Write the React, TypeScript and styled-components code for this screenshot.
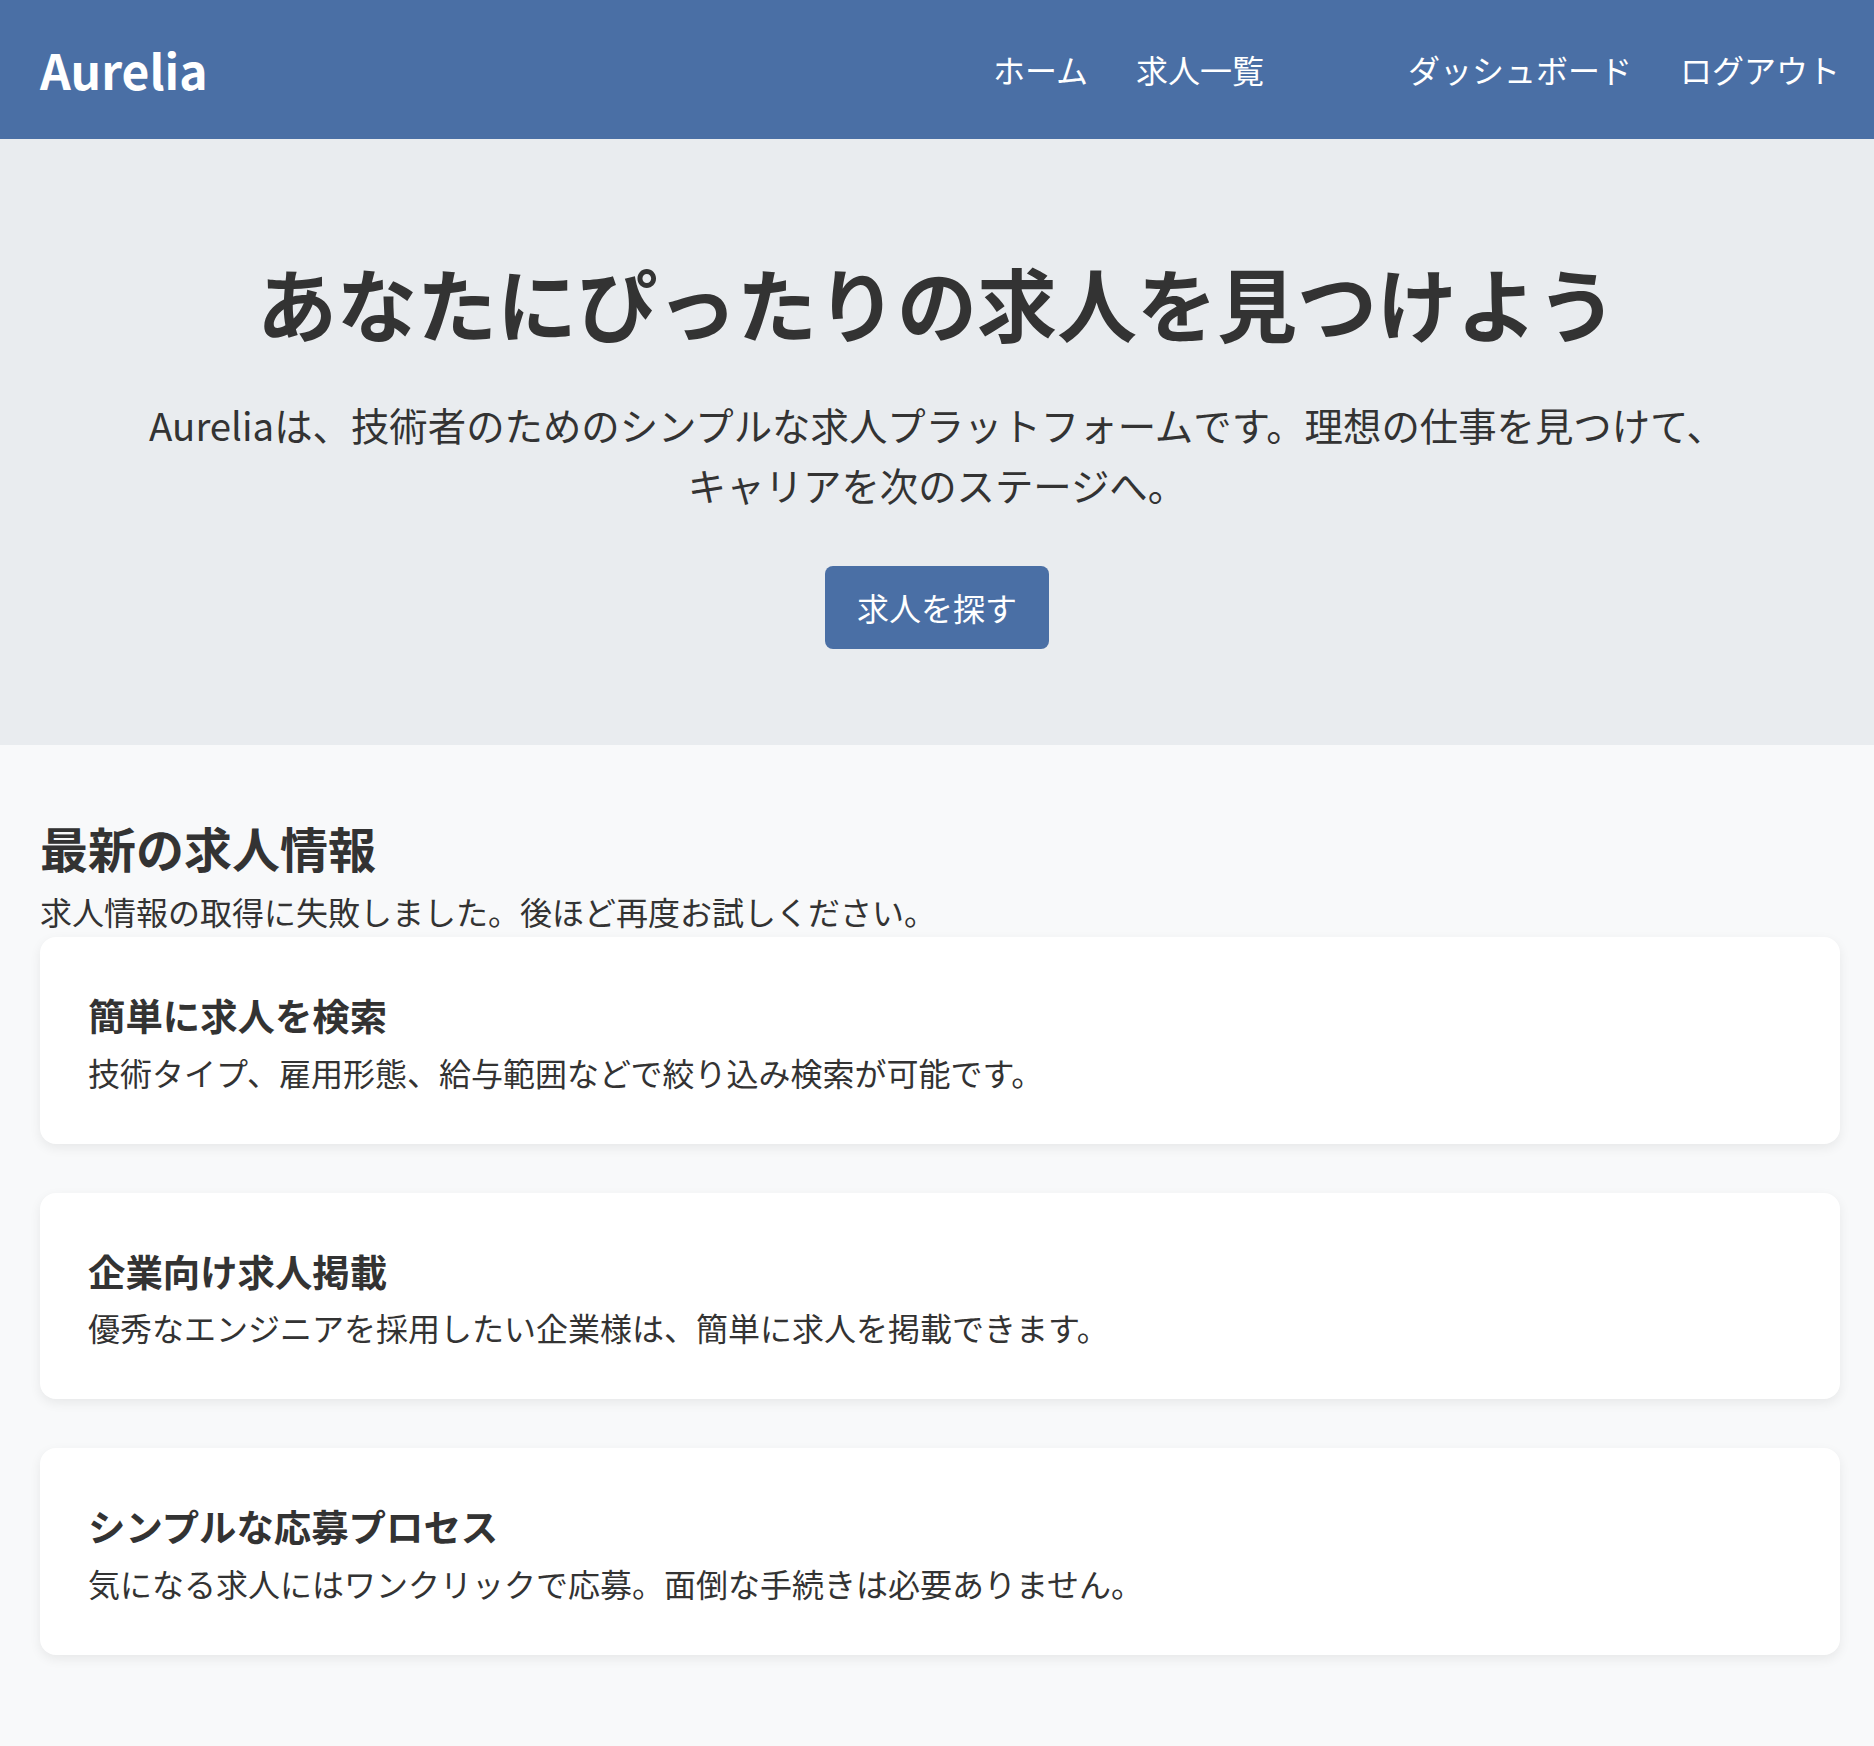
import React from "react";
import styled, { createGlobalStyle } from "styled-components";

const GlobalStyle = createGlobalStyle`
  html, body {
    margin: 0;
    padding: 0;
    background: #f8f9fa;
  }
  body {
    font-family: "Noto Sans CJK JP", "Noto Sans", sans-serif;
    color: #333333;
    font-size: 32px;
    line-height: 1.6;
  }
  * { box-sizing: border-box; }
`;

const Header = styled.header`
  height: 139px;
  background: #4a6fa5;
  display: flex;
  align-items: center;
  justify-content: space-between;
  padding: 0 34px 0 40px;
`;

const Logo = styled.a`
  color: #ffffff;
  font-size: 48px;
  font-weight: 700;
  text-decoration: none;
  line-height: 1.6;
`;

const Nav = styled.nav`
  display: flex;
  align-items: center;
`;

const NavGroup = styled.div<{ $offset?: number }>`
  display: flex;
  align-items: center;
  gap: 48px;
  margin-left: ${(p) => p.$offset ?? 0}px;
`;

const NavLink = styled.a`
  color: #ffffff;
  font-size: 32px;
  text-decoration: none;
  white-space: nowrap;
`;

const Hero = styled.section`
  background: #e9ecef;
  padding: 98px 40px 96px;
  display: flex;
  flex-direction: column;
  align-items: center;
  text-align: center;
`;

const HeroTitle = styled.h1`
  margin: 0 0 30px;
  font-size: 80px;
  font-weight: 700;
  line-height: 1.6;
  color: #333333;
`;

const HeroText = styled.p`
  margin: 0 0 52px;
  max-width: 1600px;
  font-size: 38.4px;
  line-height: 1.55;
  line-break: strict;
`;

const PrimaryButton = styled.a`
  display: inline-block;
  background: #4a6fa5;
  color: #ffffff;
  font-size: 32px;
  line-height: 1.6;
  padding: 16px 32px;
  border-radius: 8px;
  text-decoration: none;
`;

const Main = styled.main`
  padding: 64px 34px 92px 40px;
`;

const SectionTitle = styled.h2`
  margin: 0;
  font-size: 48px;
  font-weight: 700;
  line-height: 1.6;
`;

const ErrorText = styled.p`
  margin: 0;
  font-size: 32px;
  line-height: 1.6;
`;

const CardList = styled.div`
  display: flex;
  flex-direction: column;
  gap: 49px;
`;

const Card = styled.article`
  background: #ffffff;
  border-radius: 16px;
  padding: 48px 48px 46px;
  box-shadow: 0 4px 12px rgba(0, 0, 0, 0.07);
`;

const CardTitle = styled.h3`
  margin: 0;
  font-size: 37.4px;
  font-weight: 700;
  line-height: 61.4px;
`;

const CardText = styled.p`
  margin: 0;
  font-size: 32px;
  line-height: 1.6;
`;

const features = [
  {
    title: "簡単に求人を検索",
    text: "技術タイプ、雇用形態、給与範囲などで絞り込み検索が可能です。",
  },
  {
    title: "企業向け求人掲載",
    text: "優秀なエンジニアを採用したい企業様は、簡単に求人を掲載できます。",
  },
  {
    title: "シンプルな応募プロセス",
    text: "気になる求人にはワンクリックで応募。面倒な手続きは必要ありません。",
  },
];

export default function App() {
  return (
    <>
      <GlobalStyle />
      <Header>
        <Logo href="#">Aurelia</Logo>
        <Nav>
          <NavGroup>
            <NavLink href="#">ホーム</NavLink>
            <NavLink href="#">求人一覧</NavLink>
          </NavGroup>
          <NavGroup $offset={144}>
            <NavLink href="#">ダッシュボード</NavLink>
            <NavLink href="#">ログアウト</NavLink>
          </NavGroup>
        </Nav>
      </Header>
      <Hero>
        <HeroTitle>あなたにぴったりの求人を見つけよう</HeroTitle>
        <HeroText>
          Aureliaは、技術者のためのシンプルな求人プラットフォームです。理想の仕事を見つけて、キャリアを次のステージへ。
        </HeroText>
        <PrimaryButton href="#">求人を探す</PrimaryButton>
      </Hero>
      <Main>
        <SectionTitle>最新の求人情報</SectionTitle>
        <ErrorText>求人情報の取得に失敗しました。後ほど再度お試しください。</ErrorText>
        <CardList>
          {features.map((f) => (
            <Card key={f.title}>
              <CardTitle>{f.title}</CardTitle>
              <CardText>{f.text}</CardText>
            </Card>
          ))}
        </CardList>
      </Main>
    </>
  );
}
